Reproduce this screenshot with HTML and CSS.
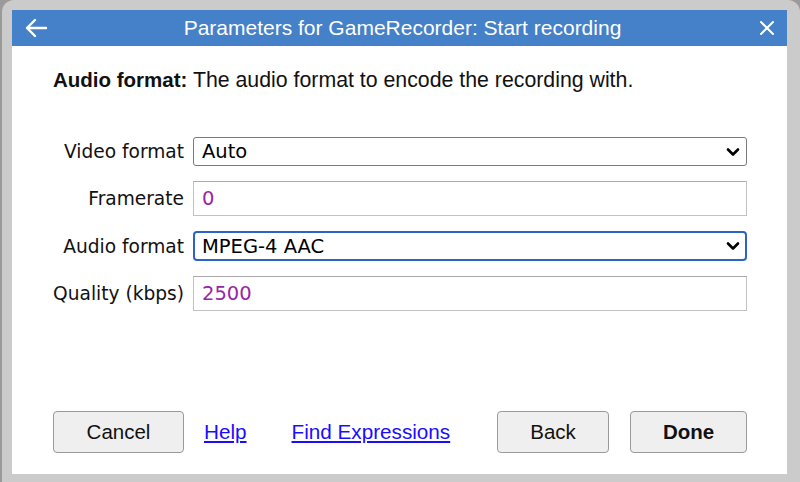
FILE: index.html
```html
<!DOCTYPE html>
<html>
<head>
<meta charset="utf-8">
<link rel="stylesheet" href="styles.css">
</head>
<body>
<div class="window">
  <div class="dialog">
    <div class="titlebar">
      <svg class="back" width="24" height="20" viewBox="0 0 24 20"><path d="M22 10H3M11 2L3 10l8 8" fill="none" stroke="#fff" stroke-width="2.4" stroke-linecap="round" stroke-linejoin="round"/></svg>
      <div class="title">Parameters for GameRecorder: Start recording</div>
      <svg class="close" width="16" height="16" viewBox="0 0 16 16"><path d="M2 2L14 14M14 2L2 14" fill="none" stroke="#fff" stroke-width="2" stroke-linecap="round"/></svg>
    </div>
    <div class="content">
      <p class="desc"><b>Audio format:</b> The audio format to encode the recording with.</p>
      <div class="form">
        <label class="lbl">Video format</label>
        <div class="select"><span>Auto</span><svg class="chev" width="14" height="10" viewBox="0 0 14 10"><path d="M2 2.5l5 5 5-5" fill="none" stroke="#000" stroke-width="2.6" stroke-linecap="round" stroke-linejoin="round"/></svg></div>
        <label class="lbl">Framerate</label>
        <div class="input">0</div>
        <label class="lbl">Audio format</label>
        <div class="select focus"><span>MPEG-4 AAC</span><svg class="chev" width="14" height="10" viewBox="0 0 14 10"><path d="M2 2.5l5 5 5-5" fill="none" stroke="#000" stroke-width="2.6" stroke-linecap="round" stroke-linejoin="round"/></svg></div>
        <label class="lbl">Quality (kbps)</label>
        <div class="input">2500</div>
      </div>
      <div class="footer">
        <button class="btn cancel">Cancel</button>
        <a class="link help" href="#">Help</a>
        <a class="link find" href="#">Find Expressions</a>
        <button class="btn back-btn">Back</button>
        <button class="btn done">Done</button>
      </div>
    </div>
  </div>
</div>
</body>
</html>
```
FILE: styles.css
```css
html, body {
  margin: 0;
  padding: 0;
}
body {
  width: 800px;
  height: 482px;
  background: #9a9a9a;
  overflow: hidden;
  font-family: "Liberation Sans", Arial, sans-serif;
}
.window {
  margin-left: 2px;
  width: 798px;
  height: 482px;
  background: #cbcbcb;
  border-radius: 12px 12px 0 0;
  padding: 10px 0 0 10px;
  box-sizing: border-box;
}
.dialog {
  width: 775px;
  height: 464px;
  background: #fff;
  display: flex;
  flex-direction: column;
}
.titlebar {
  height: 36px;
  background: #4581c8;
  display: flex;
  align-items: center;
  color: #fff;
  padding: 0 12px 0 12px;
}
.back {
  display: block;
}
.title {
  flex: 1;
  text-align: center;
  font-size: 21px;
  padding-right: 2px;
}
.close {
  display: block;
}
.content {
  flex: 1;
  display: flex;
  flex-direction: column;
  padding: 0 40px 21px 41px;
}
.desc {
  margin: 22px 0 0 0;
  font-size: 21.3px;
  color: #111;
  line-height: 24px;
  white-space: nowrap;
}
.desc b {
  font-size: 20.5px;
}
.form {
  margin-top: 45px;
  display: grid;
  grid-template-columns: 131px 1fr;
  column-gap: 9px;
  row-gap: 15px;
  align-items: center;
  font-family: "DejaVu Sans", Verdana, sans-serif;
  font-size: 18.6px;
}
.lbl {
  text-align: right;
  color: #111;
  white-space: nowrap;
}
.select {
  height: 29px;
  border: 1px solid #7a7a7a;
  border-radius: 3px;
  box-sizing: border-box;
  display: flex;
  align-items: center;
  justify-content: space-between;
  padding: 0 6px 0 8px;
  color: #000;
  font-size: 19.5px;
}
.select.focus {
  height: 30px;
  border: 2px solid #2b63c9;
  border-radius: 4px;
  padding-left: 7px;
  padding-right: 5px;
}
.chev {
  display: block;
}
.input {
  height: 35px;
  border: 1px solid #c2c2c2;
  border-top-color: #aaa;
  box-sizing: border-box;
  display: flex;
  align-items: center;
  padding-left: 8px;
  color: #9a25a8;
  font-size: 19.5px;
}
.footer {
  margin-top: auto;
  display: flex;
  align-items: center;
}
.btn {
  height: 42px;
  background: #efefef;
  border: 1px solid #9a9a9a;
  border-radius: 4px;
  font-family: "Liberation Sans", Arial, sans-serif;
  font-size: 20.5px;
  color: #111;
  padding: 0;
}
.cancel {
  width: 131px;
}
.back-btn {
  width: 112px;
  margin-left: auto;
}
.done {
  width: 117px;
  margin-left: 21px;
  font-weight: bold;
}
.link {
  color: #1a0dff;
  font-size: 20.7px;
  text-decoration: underline;
}
.help {
  margin-left: 20px;
}
.find {
  margin-left: 45px;
}
```
